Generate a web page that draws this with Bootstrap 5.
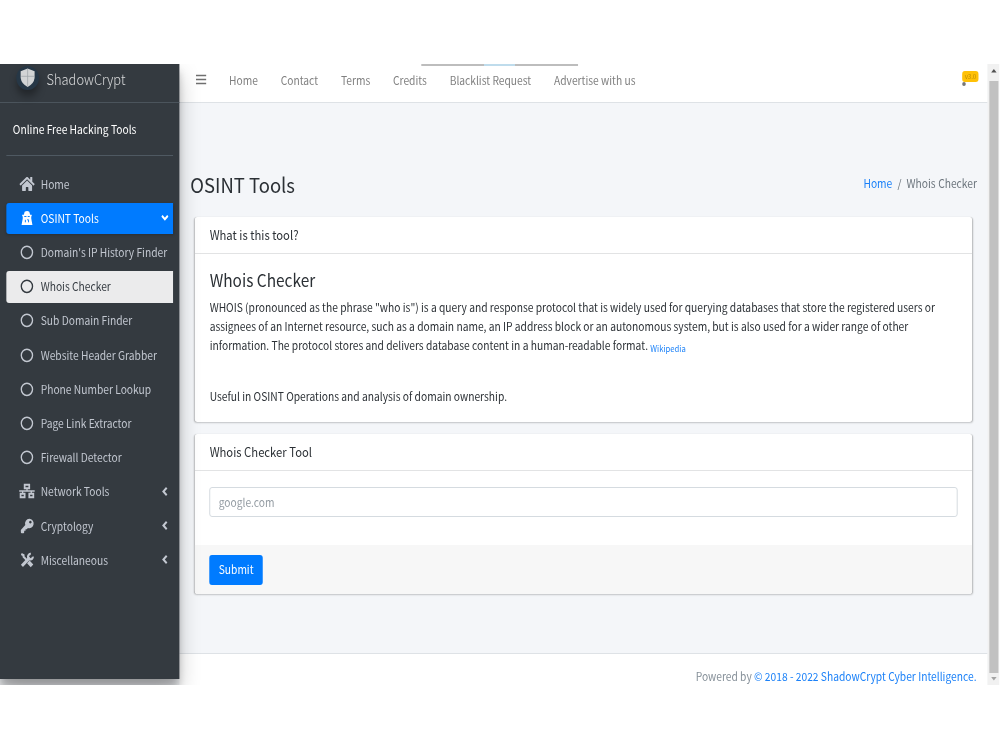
<!DOCTYPE html>
<html lang="en">
<head>
<meta charset="utf-8">
<title>ShadowCrypt | Whois Checker</title>
<link rel="stylesheet" href="https://cdn.jsdelivr.net/npm/bootstrap@5.3.0/dist/css/bootstrap.min.css">
<style>
body{font-family:"Noto Sans CJK SC",sans-serif;font-size:11.32px;line-height:19px;color:#2b3035;background:#fff;overflow:hidden}
a{text-decoration:none;color:#1a80f8}
.frame{width:1000px;height:621px;margin-top:64px;overflow:hidden}
.app{width:1103px;height:621px;transform:scaleX(.906);transform-origin:0 0;overflow:hidden;background:#f4f6f9}
.side{width:197.6px;height:615px;background:#343a40;color:#c2c7d0;box-shadow:0 11px 22px rgba(0,0,0,.25),0 8px 8px rgba(0,0,0,.22);z-index:5;flex:none}
.brand{height:39px;border-bottom:1px solid #4b545c;padding:0 0 7px 16px}
.brand b{font-size:14.2px;font-weight:300;color:rgba(255,255,255,.8);margin-left:6.4px}
.logo{width:29px;height:26px;border-radius:50%;filter:drop-shadow(0 6px 4px rgba(0,0,0,.35));margin-top:-3px}
.user{height:53px;margin:0 6.5px;border-bottom:1px solid #4f5962;padding:0 0 0 7.7px;color:#fff}
.menu{padding:12.3px 6.5px 0 6.5px}
.menu a{height:31.6px;margin-bottom:2.62px;color:#c2c7d0;border-radius:3px 0 0 3px;padding:0 5.5px 0 13.4px;white-space:nowrap}
.menu a svg.ic{width:20px;height:16px;margin-right:5px;flex:none;margin-top:-1px}
.menu a.on{background:#007bff;color:#fff;box-shadow:0 1px 3px rgba(0,0,0,.2)}
.menu a.sub{background:rgba(255,255,255,.9);color:#343a40}
.menu .arr{width:8px;height:9px;margin-left:auto;margin-top:-1px}
.top{height:39px;border-bottom:1px solid #dee2e6;background:#fff;padding:0 10px 6px 18px;color:#808080;flex:none}
.top a{color:#808080;margin-right:25.2px}
.ver{font-size:7px;line-height:11px;height:11px;width:18.5px;background:#ffc107;color:#c08d00;border-radius:3px;text-align:center;letter-spacing:-.2px;margin-top:-7px}
.dot{width:4px;height:4px;border-radius:50%;background:#777;left:0;top:10.5px}
.main-col{min-width:0}
.pagehead{padding:67px 12px 0 12.5px;height:114px}
.pagehead h1{font-size:20.4px;line-height:28px;font-weight:400;margin:0}
.crumb{padding-top:4px;color:#6c757d;word-spacing:.3px}
.bx{margin:0 17.8px 12px;background:#fff;border-radius:3px;box-shadow:0 0 1px rgba(0,0,0,.125),0 1px 2px rgba(0,0,0,.2);overflow:hidden}
.bx .hd{height:37px;border-bottom:1px solid #e2e3e4;padding:0 16px;font-size:12.45px}
.bx h4{font-size:17.05px;line-height:24px;font-weight:400;margin:0 0 6px}
.bx p{margin:0;white-space:nowrap}
.bx input{height:30px;border:1px solid #d3d9de;border-radius:3px;font-size:11.32px;padding:0 9px;width:100%;display:block}
.bx input::placeholder{color:#939ba2;opacity:1}
.bx .ft{background:#f7f7f7;height:49px;padding:0 16px}
.btn-send{background:#007bff;color:#fff;height:30px;width:58.5px;border-radius:3px;font-size:11.32px;line-height:19px;padding:0;border:0}
.foot{height:32px;border-top:1px solid #dee2e6;background:#fff;color:#869099;padding:13px 12.5px 0 0;text-align:right}
.sbar{width:12.7px;background:#f1f1f1;flex:none}
.sbar i{display:block;width:10px;background:#c1c1c1;height:592px}
.tick{width:173px;height:1.5px;left:464.5px;top:0;background:linear-gradient(90deg,#bdbdbd 40%,#bfdcec 40% 60%,#bdbdbd 60%);z-index:6}
</style>
</head>
<body>
<svg width="0" height="0" class="d-none">
<symbol id="chev" viewBox="0 0 8 9"><path d="M6 .8L2.400 4.500L6 8.200" fill="none" stroke="currentColor" stroke-width="2.200"/></symbol>
<symbol id="ring" viewBox="0 0 20 16"><ellipse cx="9.700" cy="8.300" rx="6.200" ry="6.100" fill="none" stroke="currentColor" stroke-width="1.500"/></symbol>
</svg>
<div class="frame">
<div class="app d-flex position-relative">
<div class="tick position-absolute"></div>
<aside class="side position-relative">
  <div class="brand d-flex align-items-center"><svg class="logo" viewBox="0 0 29 26"><ellipse cx="14.500" cy="13" rx="12.500" ry="12" fill="#263746"/><path d="M14.500 3.500L22.200 6.300V13Q21.500 18.500 14.500 22Q7.500 18.500 6.800 13V6.300Z" fill="#d2d4d5"/><path d="M14.500 4V21.500M7.500 11.300H21.500" stroke="#9fa4a8" stroke-width=".8"/></svg><b>ShadowCrypt</b></div>
  <div class="user d-flex align-items-center">Online Free Hacking Tools</div>
  <nav class="menu">
    <a href="#" class="d-flex align-items-center"><svg class="ic" viewBox="0 0 576 512" fill="currentColor"><path d="M280 148L96 300v164c0 9 7 16 16 16h112c9 0 16-7 16-16v-94c0-9 7-16 16-16h64c9 0 16 7 16 16v94c0 9 7 16 16 16h112c9 0 16-7 16-16V300L296 148c-5-4-11-4-16 0zM572 251l-84-69V44c0-7-5-12-12-12h-56c-7 0-12 5-12 12v72L318 43c-18-14-43-14-61 0L4 251c-5 4-5 12-1 17l26 31c4 5 12 5 17 1L280 108c5-4 11-4 16 0l234 193c5 4 12 4 17-1l26-31c4-6 4-13-1-18z" transform="translate(20 0) scale(.92 1)"/></svg>Home</a>
    <a href="#" class="on d-flex align-items-center"><svg class="ic" viewBox="0 0 20 16" fill="currentColor"><path d="M7.200 1.800Q10 .2 12.300 1.800L13.300 4.700H15V6.200H14.500V8.500L15.800 15H3.800L5.100 8.500V6.200H4.500V4.700H6.300Z"/><path d="M6.800 6.500H9.200M10.600 6.500H12.800M8 9.800V12.300M10 9.800H11.500V12.300" stroke="#007bff" stroke-width="1"/></svg>OSINT Tools<svg class="arr" viewBox="0 0 8 9"><path d="M.7 2.800L4 6.200L7.300 2.800" fill="none" stroke="#fff" stroke-width="2.200"/></svg></a>
    <a href="#" class="d-flex align-items-center"><svg class="ic"><use href="#ring"/></svg>Domain's IP History Finder</a>
    <a href="#" class="sub d-flex align-items-center"><svg class="ic"><use href="#ring"/></svg>Whois Checker</a>
    <a href="#" class="d-flex align-items-center"><svg class="ic"><use href="#ring"/></svg>Sub Domain Finder</a>
    <a href="#" class="d-flex align-items-center"><svg class="ic"><use href="#ring"/></svg>Website Header Grabber</a>
    <a href="#" class="d-flex align-items-center"><svg class="ic"><use href="#ring"/></svg>Phone Number Lookup</a>
    <a href="#" class="d-flex align-items-center"><svg class="ic"><use href="#ring"/></svg>Page Link Extractor</a>
    <a href="#" class="d-flex align-items-center"><svg class="ic"><use href="#ring"/></svg>Firewall Detector</a>
    <a href="#" class="d-flex align-items-center"><svg class="ic" viewBox="0 0 20 16" fill="none" stroke="currentColor" stroke-width="1.900"><path d="M7.200 1.700H12.300V5.200H7.200ZM2.700 10.800H7.200V14.300H2.700ZM12.300 10.800H16.800V14.300H12.300Z"/><path d="M1.200 8H18.300M9.800 5.200V8M5 8V10.800M14.500 8V10.800" stroke-width="1.400"/></svg>Network Tools<svg class="arr"><use href="#chev"/></svg></a>
    <a href="#" class="d-flex align-items-center"><svg class="ic" viewBox="0 0 20 16" fill="currentColor"><path fill-rule="evenodd" d="M12.400 .8a4.700 4.700 0 1 1-1.600 9.100L9.600 11.200H8.200V12.700H6.700V14.200Q6.700 15.200 5.700 15.200H4Q3 15.200 3 14.200V12L7.900 7A4.700 4.700 0 0 1 12.400 .8ZM13.500 2.700a1.400 1.400 0 1 0 .01 0Z"/></svg>Cryptology<svg class="arr"><use href="#chev"/></svg></a>
    <a href="#" class="d-flex align-items-center"><svg class="ic" viewBox="0 0 20 16" fill="none" stroke="currentColor"><path d="M3.500 2L6 3.200V4.800L10.500 9" stroke-width="2.200"/><path d="M11.300 9.800L15.300 13.800" stroke-width="4"/><path d="M4.200 13.800L13 5.500" stroke-width="3.200"/><path d="M16.300 4.600A2.700 2.700 0 1 1 14 2" stroke-width="2.300"/></svg>Miscellaneous<svg class="arr"><use href="#chev"/></svg></a>
  </nav>
</aside>
<div class="main-col flex-grow-1 d-flex flex-column">
  <header class="top d-flex align-items-center">
    <a href="#" class="d-flex"><svg width="12" height="12" viewBox="0 0 12 12"><path d="M.3 1.500H11.700M.3 5.500H11.700M.3 9.500H11.700" stroke="#6f6f6f" stroke-width="1.700"/></svg></a>
    <a href="#">Home</a><a href="#">Contact</a><a href="#">Terms</a><a href="#">Credits</a><a href="#">Blacklist Request</a><a href="#">Advertise with us</a>
    <div class="ver ms-auto position-relative">v3.0<span class="dot position-absolute"></span></div>
  </header>
  <div class="pagehead d-flex justify-content-between align-items-start"><h1>OSINT Tools</h1><div class="crumb"><a href="#">Home</a>&nbsp; / &nbsp;Whois Checker</div></div>
  <section class="bx" style="height:205px">
    <div class="hd d-flex align-items-center">What is this tool?</div>
    <div style="padding:14px 16px">
      <h4>Whois Checker</h4>
      <p>WHOIS (pronounced as the phrase "who is") is a query and response protocol that is widely used for querying databases that store the registered users or<br>assignees of an Internet resource, such as a domain name, an IP address block or an autonomous system, but is also used for a wider range of other<br>information. The protocol stores and delivers database content in a human-readable format. <sub><a href="#">Wikipedia</a></sub></p>
      <p style="margin-top:31.500px">Useful in OSINT Operations and analysis of domain ownership.</p>
    </div>
  </section>
  <section class="bx" style="height:160px">
    <div class="hd d-flex align-items-center">Whois Checker Tool</div>
    <div style="height:74px;padding:16px 16px 0"><input type="text" placeholder="google.com"></div>
    <div class="ft d-flex align-items-center"><button class="btn-send">Submit</button></div>
  </section>
  <footer class="foot mt-auto">Powered by <a href="#">© 2018 - 2022 ShadowCrypt Cyber Intelligence.</a></footer>
</div>
<div class="sbar d-flex flex-column align-items-center"><svg width="12" height="17"><path d="M3 8.500L6 5L9 8.500Z" fill="#505050"/></svg><i></i><svg width="12" height="12"><path d="M3 4L6 7.500L9 4Z" fill="#a3a3a3"/></svg></div>
</div>
</div>
<script src="https://cdn.jsdelivr.net/npm/bootstrap@5.3.0/dist/js/bootstrap.bundle.min.js"></script>
</body>
</html>
